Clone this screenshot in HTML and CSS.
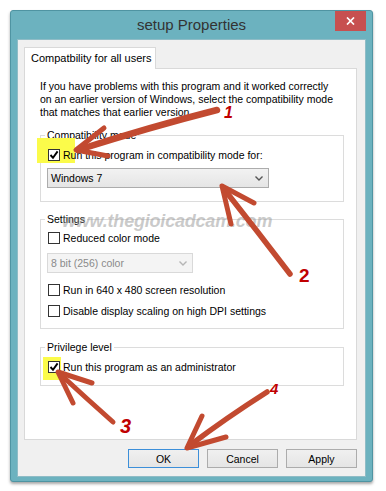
FILE: index.html
```html
<!DOCTYPE html>
<html lang="en">
   <head>
      <meta charset="UTF-8">
      <meta name="viewport" content="width=device-width, initial-scale=1.0">
      <link rel="stylesheet" href="styles.css">
      <title>setup Properties</title>
   </head>
   <body>
      <div class="window">
         <div class="titlebar">
            <span></span>
            <h1 class="title">setup Properties</h1>
            <button class="close"><svg width="9" height="8" viewBox="0 0 9 8"><path d="M1 0.5 L8 7.5 M8 0.5 L1 7.5" stroke="#fff" stroke-width="1.7"/></svg></button>
         </div>
         <div class="client">
            <div class="tab">Compatbility for all users</div>
            <div class="page">
               <p class="intro">If you have problems with this program and it worked correctly<br>on an earlier version of Windows, select the compatibility mode<br>that matches that earlier version.</p>
               <fieldset class="group group-mode">
                  <legend>Compatibility mode</legend>
                  <div class="check">
                     <span class="highlight hl-mode"></span>
                     <span class="box"><svg width="10" height="10" viewBox="0 0 10 10"><path d="M1.5 5 L4 7.8 L8.6 1.4" fill="none" stroke="#000" stroke-width="1.9"/></svg></span>
                     <span class="label">Run this program in compatibility mode for:</span>
                  </div>
                  <div class="select">
                     <span>Windows 7</span>
                     <svg width="8" height="5" viewBox="0 0 8 5"><path d="M0.5 0.5 L4 4 L7.5 0.5" fill="none" stroke="#555" stroke-width="1.4"/></svg>
                  </div>
               </fieldset>
               <fieldset class="group group-settings">
                  <legend>Settings</legend>
                  <div class="check">
                     <span class="box"></span>
                     <span class="label">Reduced color mode</span>
                  </div>
                  <div class="select disabled">
                     <span>8 bit (256) color</span>
                     <svg width="8" height="5" viewBox="0 0 8 5"><path d="M0.5 0.5 L4 4 L7.5 0.5" fill="none" stroke="#b5b5b5" stroke-width="1.4"/></svg>
                  </div>
                  <div class="check check-gap">
                     <span class="box"></span>
                     <span class="label">Run in 640 x 480 screen resolution</span>
                  </div>
                  <div class="check check-next">
                     <span class="box"></span>
                     <span class="label">Disable display scaling on high DPI settings</span>
                  </div>
               </fieldset>
               <fieldset class="group group-admin">
                  <legend>Privilege level</legend>
                  <div class="check">
                     <span class="highlight hl-admin"></span>
                     <span class="box"><svg width="10" height="10" viewBox="0 0 10 10"><path d="M1.5 5 L4 7.8 L8.6 1.4" fill="none" stroke="#000" stroke-width="1.9"/></svg></span>
                     <span class="label">Run this program as an administrator</span>
                  </div>
               </fieldset>
            </div>
            <div class="buttons">
               <button class="btn btn-default">OK</button>
               <button class="btn">Cancel</button>
               <button class="btn">Apply</button>
            </div>
         </div>
      </div>
      <span class="watermark">www.thegioicadcam.com</span>
      <svg class="marks" width="386" height="491" viewBox="0 0 386 491">
         <g fill="none" stroke="#c24a30" stroke-linecap="round" stroke-linejoin="round">
            <path d="M217 110 Q150 127 78 150" stroke-width="6.5"/>
            <path d="M104 128 L76 150 L108 156" stroke-width="5"/>
            <path d="M290 274 Q258 232 224 189" stroke-width="5.5"/>
            <path d="M231 224 L222 186 L254 203" stroke-width="5"/>
            <path d="M113 422 Q86 398 60 374" stroke-width="5"/>
            <path d="M92 383 L58 372 L73 403" stroke-width="5"/>
            <path d="M267 392 Q226 418 189 446" stroke-width="5.5"/>
            <path d="M202 416 L187 448 L226 437" stroke-width="5"/>
         </g>
         <g class="numbers" fill="#c00000">
            <text x="224" y="118" font-size="16" font-style="italic">1</text>
            <text x="299" y="282" font-size="19">2</text>
            <text x="120" y="433" font-size="20" font-style="italic">3</text>
            <text x="270" y="394" font-size="15" font-style="italic">4</text>
         </g>
      </svg>
   </body>
</html>
```
FILE: styles.css
```css
body {
margin: 0;
background: #fff;
font-family: "Liberation Sans", Arial, sans-serif;
font-size: 10.5px;
color: #000;
position: relative;
width: 386px;
height: 491px;
overflow: hidden;
}
.window {
width: 363px;
margin: 10px 0 0 10px;
box-sizing: border-box;
background: #6cb2bf;
border: 1px solid #4f94a2;
border-radius: 3px;
padding: 0 6px 4px 6px;
box-shadow: 0 2px 3px rgba(0, 0, 0, .35);
}
.titlebar {
display: grid;
grid-template-columns: 31px 1fr 31px;
height: 28px;
}
.title {
margin: 0;
font-size: 15px;
font-weight: normal;
line-height: 28px;
text-align: center;
color: #333;
}
.close {
height: 20px;
border: none;
padding: 0;
background: #c75050;
display: flex;
align-items: center;
justify-content: center;
}
.client {
height: 438px;
box-sizing: border-box;
background: #f0f0f0;
border: 1px solid #8fbcc6;
padding: 7px 8px 0 6px;
}
.tab {
position: relative;
width: 132px;
height: 22px;
box-sizing: border-box;
margin-bottom: -1px;
padding: 0 6px;
line-height: 21px;
white-space: nowrap;
font-size: 11px;
background: #fff;
border: 1px solid #d9d9d9;
border-bottom: none;
}
.page {
height: 372px;
box-sizing: border-box;
background: #fff;
border: 1px solid #d9d9d9;
padding: 11px 12px 0 15px;
}
.intro {
margin: 0;
line-height: 13px;
white-space: nowrap;
}
.group {
margin: 10px 0 0;
padding: 6px 8px 13px 6px;
border: 1px solid #dcdcdc;
min-width: 0;
}
.group legend {
padding: 0 2px;
margin-left: -2px;
line-height: 13px;
}
.group-settings {
margin-top: 11px;
padding-top: 5px;
padding-bottom: 11px;
}
.group-admin {
margin-top: 12px;
padding-top: 6px;
padding-bottom: 12px;
}
.check {
position: relative;
display: flex;
align-items: center;
height: 13px;
white-space: nowrap;
}
.check-gap {
margin-top: 10px;
}
.check-next {
margin-top: 8px;
}
.box {
position: relative;
flex: none;
width: 12px;
height: 12px;
box-sizing: border-box;
margin: 0 3px 0 1px;
border: 1px solid #333;
background: #fff;
display: flex;
align-items: center;
justify-content: center;
}
.label {
position: relative;
}
.highlight {
position: absolute;
background: #fbfb4a;
}
.hl-mode {
left: -10px;
top: -10px;
width: 38px;
height: 25px;
}
.hl-admin {
left: -4px;
top: -3px;
width: 18px;
height: 23px;
}
.select {
margin-top: 7px;
width: 222px;
height: 20px;
box-sizing: border-box;
border: 1px solid #acacac;
background: linear-gradient(#f2f2f2, #e5e5e5);
display: flex;
align-items: center;
justify-content: space-between;
padding: 0 5px 0 3px;
}
.select.disabled {
margin-top: 9px;
width: 146px;
border-color: #d9d9d9;
background: #f4f4f4;
color: #8a8a8a;
}
.buttons {
display: flex;
justify-content: flex-end;
gap: 8px;
margin-top: 9px;
}
.btn {
width: 71px;
height: 19px;
padding: 0;
border: 1px solid #acacac;
background: linear-gradient(#f0f0f0, #e5e5e5);
font: inherit;
color: #000;
}
.btn-default {
border-color: #3c8fd9;
}
.watermark {
position: absolute;
left: 62px;
top: 211px;
font-size: 18px;
font-weight: bold;
font-style: italic;
letter-spacing: -0.2px;
color: rgba(150, 150, 150, .5);
}
.marks {
position: absolute;
left: 0;
top: 0;
pointer-events: none;
}
.numbers {
font-family: "Liberation Sans", Arial, sans-serif;
font-weight: bold;
}
```
